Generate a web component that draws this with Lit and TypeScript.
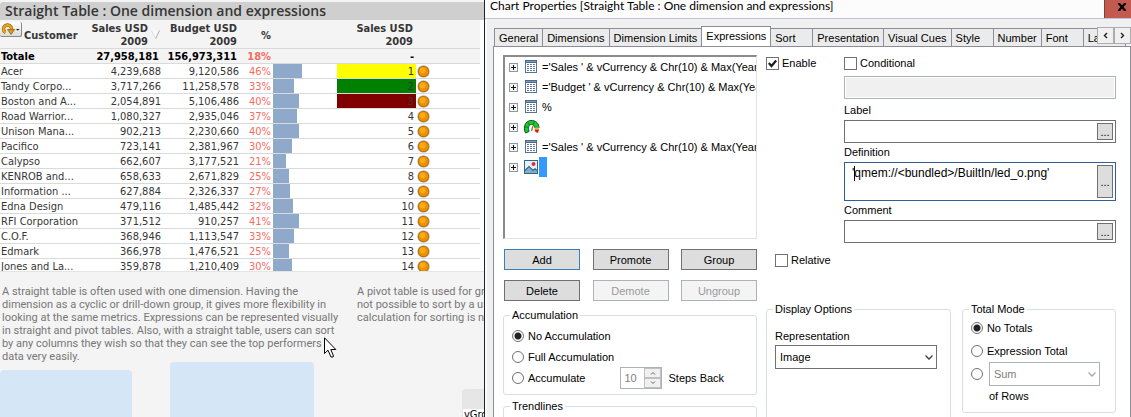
import { LitElement, html, css, svg, nothing } from "lit";
import { customElement } from "lit/decorators.js";
import { classMap } from "lit/directives/class-map.js";

type Row = [string, string, string, number];

const rows: Row[] = [
  ["Acer", "4,239,688", "9,120,586", 46],
  ["Tandy Corpo...", "3,717,266", "11,258,578", 33],
  ["Boston and A...", "2,054,891", "5,106,486", 40],
  ["Road Warrior...", "1,080,327", "2,935,046", 37],
  ["Unison Mana...", "902,213", "2,230,660", 40],
  ["Pacifico", "723,141", "2,381,967", 30],
  ["Calypso", "662,607", "3,177,521", 21],
  ["KENROB and...", "658,633", "2,671,829", 25],
  ["Information ...", "627,884", "2,326,337", 27],
  ["Edna Design", "479,116", "1,485,442", 32],
  ["RFI Corporation", "371,512", "910,257", 41],
  ["C.O.F.", "368,946", "1,113,547", 33],
  ["Edmark", "366,978", "1,476,521", 25],
  ["Jones and La...", "359,878", "1,210,409", 30],
];

const reset = css`
  *, *::before, *::after { box-sizing: border-box; }
  button, input, select, textarea { font: inherit; color: inherit; margin: 0; border-radius: 0; }
`;

@customElement("sheet-view")
class SheetView extends LitElement {
  static styles = [reset, css`
    :host {
      display: flex; flex-direction: column; position: relative; overflow: hidden;
      background: #f4f4f4; color: #363636;
      font: 11px/14px "DejaVu Sans Condensed", "DejaVu Sans", sans-serif;
    }
    .above { height: 2px; display: flex; align-items: flex-end; gap: 26px; padding-left: 342px; overflow: hidden; font-weight: bold; line-height: 11px; flex: none; }
    .caption { margin: 0; height: 18px; padding-left: 5px; flex: none; background: #cfcfcf; font: 600 14px/17px "Open Sans", sans-serif; white-space: nowrap; color: #363636; border-top-left-radius: 3px; }
    .tablewrap { background: #fff; height: 252px; overflow: hidden; border-bottom: 1px solid #e4e4e4; flex: none; padding-right: 4px; }
    table { width: 100%; table-layout: fixed; border-collapse: separate; border-spacing: 0; }
    th, td { padding: 0 1px; text-align: right; white-space: nowrap; overflow: hidden; border-bottom: 1px solid #dadada; }
    th { background: #f4f4f4; height: 29px; line-height: 13px; padding-top: 2px; }
    td { height: 15px; line-height: 12px; padding-top: 2px; }
    .name { width: 78px; text-align: left; }
    .sales { width: 84px; }
    .budget { width: 78px; }
    .pct { width: 33px; padding-right: 2px; }
    .gauge { width: 64px; padding: 0; }
    .rank { width: 79px; padding-right: 2px; }
    td.pct { color: #f76b5f; }
    th.sales { padding-right: 2px; }
    th.budget, th.rank { padding-right: 3px; }
    .custhead { display: flex; align-items: center; gap: 2px; }
    .cycle { width: 22px; height: 15px; padding: 0; border: 1px solid #888; border-width: 0 1px 1px 0; border-radius: 2px; background: linear-gradient(#fff, #dcdcdc); display: grid; place-items: center; margin: -12px 0 0 -1px; flex: none; }
    .saleshead { display: flex; justify-content: flex-end; align-items: center; gap: 3px; }
    .total td { font-weight: bold; color: #000; background: #f4f4f4; }
    .total td.pct { color: #f76b5f; }
    .total .sales, .total .budget { padding-right: 3px; }
    .bar { height: 14px; background: #8ea9ca; }
    .yellow { background: #ff0; }
    .green { background: #008000; }
    .maroon { background: #800000; }
    .led { text-align: left; padding: 0 1px; }
    .led svg { display: block; }
    .notes { display: grid; grid-template-columns: 355px 1fr; padding: 13px 0 0 2px; height: 90px; font: 11px/13px Roboto, sans-serif; color: #777; white-space: nowrap; flex: none; }
    .notes p { margin: 0; }
    .cards { flex: 1; display: flex; align-items: stretch; min-height: 0; }
    .card { background: #d5e6f6; border-radius: 4px 4px 0 0; }
    .small { width: 132px; margin: 8px 38px 0 0; }
    .large { width: 144px; margin-right: 148px; }
    .variable { flex: 1; margin-top: 27px; background: #e6e6e6; border-radius: 4px 0 0 0; padding: 20px 0 0 1px; overflow: hidden; color: #000; }
    .variable span { display: block; background: #fff; padding-left: 1px; line-height: 12px; height: 30px; }
    .cursor { position: absolute; left: 324px; top: 337px; }
  `];

  render() {
    return html`
      <div class="above"><span>Names</span><span>Names</span></div>
      <h1 class="caption">Straight Table : One dimension and expressions</h1>
      <div class="tablewrap">
        <table>
          <thead><tr>
            <th class="name"><div class="custhead">
              <button class="cycle" aria-label="Cycle dimension">
                <svg width="20" height="14" viewBox="0 0 20 14">
                  <path d="M4.500 10.500A4 4 0 1 1 10.500 7" fill="none" stroke="#9a6200" stroke-width="3.400"/>
                  <path d="M4.500 10.500A4 4 0 1 1 10.500 7" fill="none" stroke="#f0a820" stroke-width="2"/>
                  <path d="M6.500 7.500h7.200L10 12.500z" fill="#e09a10" stroke="#805000" stroke-width=".7"/>
                  <path d="M15 7h3.600l-1.800 1.800z" fill="#222"/>
                </svg>
              </button>Customer</div></th>
            <th class="sales"><div class="saleshead"><span>Sales USD<br>2009</span>
              <svg width="9" height="10" viewBox="0 0 9 10"><path d="M.5.5h8L4.500 9z" fill="#f8f8f8"/><path d="M8.500.5L4.500 9" stroke="#aaa"/><path d="M.5.5L4.500 9" stroke="#ddd"/></svg>
            </div></th>
            <th class="budget">Budget USD<br>2009</th>
            <th class="pct">%</th><th class="gauge"></th>
            <th class="rank">Sales USD<br>2009</th><th></th>
          </tr></thead>
          <tbody>
            <tr class="total"><td class="name">Totale</td><td class="sales">27,958,181</td><td class="budget">156,973,311</td><td class="pct">18%</td><td></td><td class="rank">-</td><td></td></tr>
            ${rows.map(([name, sales, budget, pct], i) => html`<tr>
              <td class="name">${name}</td><td class="sales">${sales}</td><td class="budget">${budget}</td><td class="pct">${pct}%</td>
              <td class="gauge"><div class="bar" style="width:${Math.round(pct * 0.64)}px"></div></td>
              <td class=${classMap({ rank: true, yellow: i === 0, green: i === 1, maroon: i === 2 })}>${i + 1}</td>
              <td class="led"><svg width="13" height="13" viewBox="0 0 13 13">
                <circle cx="6.500" cy="6.500" r="6.200" fill="#b9b4a8"/>
                <circle cx="6.500" cy="6.500" r="5.500" fill="#a8690c"/>
                <circle cx="6.500" cy="6.500" r="4.800" fill="#f09000"/><circle cx="5.600" cy="5.400" r="2.800" fill="#ffac12"/>
              </svg></td></tr>`)}
          </tbody>
        </table>
      </div>
      <div class="notes">
        <p>A straight table is often used with one dimension. Having the<br>dimension as a cyclic or drill-down group, it gives more flexibility in<br>looking at the same metrics. Expressions can be represented visually<br>in straight and pivot tables. Also, with a straight table, users can sort<br>by any columns they wish so that they can see the top performers<br>data very easily.</p>
        <p>A pivot table is used for gro<br>not possible to sort by a use<br>calculation for sorting is nee</p>
      </div>
      <div class="cards"><div class="card small"></div><div class="card large"></div><div class="variable"><span>vGroup</span></div></div>
      <svg class="cursor" width="13" height="22" viewBox="0 0 13 22"><path d="M.5.8V16.500L4 13.200L7 20H9L9.500 19L6.800 12.500H11.800Z" fill="#fff" stroke="#000"/></svg>
    `;
  }
}

const tableIcon = svg`<rect x=".5" y=".5" width="11" height="12" fill="#fff" stroke="#5a7394"/><path d="M0 0h12v3H0z" fill="#4b698f"/><path d="M1 1h10v1H1z" fill="#7f9cc0"/><path d="M2 4h2v1H2zM5 4h2v1H5zM8 4h2v1H8zM2 6h2v1H2zM5 6h2v1H5zM8 6h2v1H8zM2 8h2v1H2zM5 8h2v1H5zM8 8h2v1H8zM2 10h2v1H2zM5 10h2v1H5zM8 10h2v1H8z" fill="#6078a8"/>`;
const gaugeIcon = svg`<path d="M1.500 13C-1 8 .5 1 7 .5C12 .3 15 3.500 15 8H11C10.500 5.500 9 4.500 7.500 4.500C5 4.500 4 7 5 11.500z" fill="#1cc832" stroke="#0a5c14"/><path d="M4 2.500L5.500 5M1 7H4M10 1.500L9.500 4.500" stroke="#0a7a1c"/><path d="M10.500 7.500h4.500v2h-4.500z" fill="#e8c020"/><path d="M10.500 9.500h4.500L14 13L11.500 12z" fill="#e01818"/><path d="M7.500 11L9 6" stroke="#777" stroke-width="1.300"/>`;
const imageIcon = svg`<rect x=".5" y=".5" width="13" height="13" fill="#e4f1f8" stroke="#35668a"/><path d="M1 13V11L5 7.500L9 11L11 9.500L13 11V13z" fill="#7fb0c8"/><path d="M1 10.500L5 6.500L9 10.500L11 8.800L13 10.500" fill="none" stroke="#2f5f80" stroke-width="1.200"/><circle cx="9.500" cy="4" r="2" fill="#e03028"/>`;

const tree: [unknown, string][] = [
  [tableIcon, "='Sales ' & vCurrency & Chr(10) & Max(Year"],
  [tableIcon, "='Budget ' & vCurrency & Chr(10) & Max(Year"],
  [tableIcon, "%"],
  [gaugeIcon, ""],
  [tableIcon, "='Sales ' & vCurrency & Chr(10) & Max(Year"],
  [imageIcon, ""],
];

const tabs = ["General", "Dimensions", "Dimension Limits", "Expressions", "Sort", "Presentation", "Visual Cues", "Style", "Number", "Font", "Layout"];

@customElement("chart-properties")
class ChartProperties extends LitElement {
  static styles = [reset, css`
    :host {
      display: flex; flex-direction: column; overflow: hidden; min-width: 0;
      border-left: 1px solid #20242c; background: #fcfcfc; color: #000;
      font: 11px/14px "Liberation Sans", Arial, sans-serif;
    }
    .title { display: flex; height: 19px; flex: none; border-bottom: 1px solid #bcc6d8; padding-left: 5px; }
    h2 { margin: 0; flex: 1; font: 12px/12px Lato, "Open Sans", sans-serif; white-space: nowrap; overflow: hidden; }
    .close { width: 27px; padding: 0 0 5px 7px; border: 1px solid #7c4038; border-width: 0 0 0 1px; background: #c35a50; display: grid; place-items: center; }
    .client { flex: 1; margin-left: 2px; padding: 7px 0 0 6px; background: #f0f0f0; display: flex; flex-direction: column; min-height: 0; }
    .tabbar { display: flex; position: relative; height: 20px; flex: none; overflow: hidden; padding-left: 1px; align-items: flex-end; }
    .tab { flex: none; height: 18px; min-width: 43px; padding: 0 4px; text-align: left; border: 1px solid #8b8d98; border-bottom: 0; margin-right: -1px; background: #ebebeb; line-height: 16px; }
    .tab.active { height: 20px; background: #fff; padding: 0 4px 2px; }
    .scroll { position: absolute; right: 0; top: 1px; display: flex; }
    .scroll button { width: 17px; height: 17px; padding: 0; border: 1px solid #adadad; background: #f0f0f0; display: grid; place-items: center; }
    .page { flex: 1; min-height: 0; overflow: hidden; background: #fff; border: 1px solid #8b8d98; border-bottom: 0; padding: 8px 14px 0 9px; display: grid; grid-template-columns: 254px minmax(0, 1fr); gap: 9px; align-items: start; }
    .tree { margin: 0; list-style: none; height: 184px; padding: 0 0 0 4px; border: 2px solid #8b8b8b; border-right: 1px solid #e3e3e3; border-bottom: 1px solid #e3e3e3; overflow: hidden; }
    .tree li { display: flex; align-items: center; height: 20px; white-space: nowrap; }
    .plus { width: 9px; height: 9px; padding: 0; border: 1px solid #8b98ac; background: #f4f4f0; display: grid; place-items: center; margin-right: 6px; flex: none; }
    .glyph { width: 16px; height: 14px; flex: none; margin-right: 2px; }
    .sel { width: 8px; height: 20px; background: #3399ff; margin-left: -3px; }
    .actions { display: grid; grid-template-columns: repeat(3, 76px); justify-content: space-between; row-gap: 10px; padding-left: 1px; margin: 10px 0 7px; }
    .push { height: 21px; padding: 0; border: 1px solid #707070; background: #ddd; line-height: 18px; }
    .push.default { border-color: #3c7fb1; }
    .push:disabled { color: #9a9a9a; background: #f4f4f4; border-color: #adb2b5; }
    fieldset { margin: 0; padding: 0 8px; border: 1px solid #d5dfe5; border-radius: 3px; min-width: 0; }
    legend { padding: 0 2px; margin-left: -2px; line-height: 14px; }
    .accum { height: 87px; margin-bottom: 4px; }
    .trend { height: 50px; }
    .line { display: flex; align-items: center; height: 21px; gap: 4px; white-space: nowrap; }
    .line label { flex: none; }
    .accum .line:first-of-type { margin-top: 3px; }
    input[type="radio"] { appearance: none; flex: none; width: 12px; height: 12px; border: 1px solid #707070; border-radius: 50%; background: #fff; }
    input[type="radio"]:checked { background: radial-gradient(circle, #222 0 3px, #fff 4px); }
    input[type="checkbox"] { appearance: none; flex: none; width: 13px; height: 13px; border: 1px solid #707070; background: #fff; grid-area: 1 / 1; }
    .tick { display: grid; place-items: center; flex: none; }
    .tick svg { grid-area: 1 / 1; pointer-events: none; }
    .check { display: flex; align-items: center; gap: 3px; height: 16px; }
    .spin { display: flex; width: 42px; height: 22px; border: 1px solid #adb2b5; margin-left: 31px; margin-right: 2px; color: #808080; }
    .spin input { width: 23px; min-width: 0; border: 0; padding: 0 0 0 3px; background: #fff; outline: 0; }
    .arrows { flex: 1; display: grid; grid-template-rows: 1fr 1fr; }
    .arrows button { padding: 0; border: 1px solid #c0c0c0; background: #f0f0f0; display: grid; place-items: center; min-height: 0; }
    .settings { display: grid; grid-template-columns: 78px minmax(0, 1fr); }
    .fields { display: flex; flex-direction: column; }
    .fields > label { line-height: 19px; height: 19px; }
    .off { height: 23px; margin: 5px 0 2px; width: 100%; border: 1px solid #adb2b5; background: #f0f0f0; outline: 1px solid #fff; outline-offset: -2px; }
    .box { display: flex; border: 1px solid #707070; background: #fff; padding: 2px; height: 23px; position: relative; }
    .box input, .box textarea { flex: 1; min-width: 0; border: 0; background: none; outline: 0; padding: 0 5px; resize: none; overflow: hidden; white-space: nowrap; }
    .box.tall { height: 39px; border-color: #2b6195; }
    .code { font-size: 12px; line-height: 17px; }
    .box button { width: 16px; padding: 0; border: 1px solid #707070; background: #ddd; }
    .caret { position: absolute; left: 9px; top: 3px; width: 1px; height: 15px; background: #000; }
    .relative { margin: 9px 0 34px 9px; }
    .groups { display: grid; grid-template-columns: minmax(0, 6fr) minmax(0, 5fr); gap: 11px; align-items: start; }
    .display { height: 140px; }
    .display label { display: block; margin: 13px 0 2px; }
    .combo { display: grid; height: 24px; width: 100%; max-width: 162px; }
    .combo select { grid-area: 1 / 1; appearance: none; border: 1px solid #707070; background: #fff; padding: 0 4px; width: 100%; }
    .combo svg { grid-area: 1 / 1; align-self: center; justify-self: end; margin-right: 4px; pointer-events: none; }
    .combo.dim { width: 111px; margin-left: 2px; }
    .combo.dim select { border-color: #adb2b5; color: #808080; opacity: 1; }
    .totals { height: 111px; }
    .totals .line { height: 23px; }
    .rowsof { display: block; padding: 4px 0 0 18px; }
  `];

  chevron(color: string) {
    return html`<svg width="8" height="8" viewBox="0 0 8 8"><path d="M.5 1.500L4 5L7.500 1.500V3.500L4 7L.5 3.500z" fill=${color}/></svg>`;
  }

  render() {
    return html`
      <header class="title">
        <h2>Chart Properties [Straight Table : One dimension and expressions]</h2>
        <button class="close" aria-label="Close"><svg width="10" height="8" viewBox="0 0 10 8"><path d="M1.500 0L8.500 8M8.500 0L1.500 8" stroke="#000" stroke-width="2.200"/></svg></button>
      </header>
      <div class="client">
        <div class="tabbar" role="tablist">
          ${tabs.map((t) => html`<button role="tab" class=${classMap({ tab: true, active: t === "Expressions" })}>${t}</button>`)}
          <div class="scroll">
            <button aria-label="Previous tabs"><svg width="5" height="7" viewBox="0 0 5 7"><path d="M4 1L1.500 3.500L4 6" fill="none" stroke="#222" stroke-width="1.400"/></svg></button>
            <button aria-label="Next tabs"><svg width="5" height="7" viewBox="0 0 5 7"><path d="M1 1L3.500 3.500L1 6" fill="none" stroke="#222" stroke-width="1.400"/></svg></button>
          </div>
        </div>
        <div class="page">
          <div>
            <ul class="tree">
              ${tree.map(([icon, text], i) => html`<li>
                <button class="plus" aria-label="Expand"><svg width="7" height="7" viewBox="0 0 7 7"><path d="M3 1h1v2h2v1H4v2H3V4H1V3h2z" fill="#111"/></svg></button>
                <svg class="glyph" viewBox=${i === 3 || i === 5 ? "0 0 16 14" : "-1 0 16 14"}>${icon}</svg>
                ${text ? html`<span>${text}</span>` : nothing}
                ${i === 5 ? html`<span class="sel"></span>` : nothing}
              </li>`)}
            </ul>
            <div class="actions">
              <button class="push default">Add</button><button class="push">Promote</button><button class="push">Group</button>
              <button class="push">Delete</button><button class="push" disabled>Demote</button><button class="push" disabled>Ungroup</button>
            </div>
            <fieldset class="accum">
              <legend>Accumulation</legend>
              <div class="line"><input type="radio" name="acc" id="a1" checked><label for="a1">No Accumulation</label></div>
              <div class="line"><input type="radio" name="acc" id="a2"><label for="a2">Full Accumulation</label></div>
              <div class="line"><input type="radio" name="acc" id="a3"><label for="a3">Accumulate</label>
                <div class="spin"><input id="steps" value="10" disabled><div class="arrows">
                  <button disabled aria-label="More"><svg width="6" height="4" viewBox="0 0 6 4"><path d="M1 3.500L3 1.500L5 3.500" fill="none" stroke="#666"/></svg></button>
                  <button disabled aria-label="Fewer"><svg width="6" height="4" viewBox="0 0 6 4"><path d="M1 .5L3 2.500L5 .5" fill="none" stroke="#666"/></svg></button>
                </div></div>
                <label for="steps">Steps Back</label></div>
            </fieldset>
            <fieldset class="trend"><legend>Trendlines</legend></fieldset>
          </div>
          <div>
            <div class="settings">
              <div class="check"><span class="tick"><input type="checkbox" id="enable" checked><svg width="9" height="9" viewBox="0 0 9 9"><path d="M.8 4L3.500 7L8.200 1.500" fill="none" stroke="#1c1c1c" stroke-width="2.200"/></svg></span><label for="enable">Enable</label></div>
              <div class="fields">
                <div class="check"><input type="checkbox" id="cond"><label for="cond">Conditional</label></div>
                <input class="off" aria-label="Condition" disabled>
                <label for="label">Label</label>
                <div class="box"><input id="label"><button>...</button></div>
                <label for="def">Definition</label>
                <div class="box tall"><textarea class="code" id="def" .value=${"'qmem://<bundled>/BuiltIn/led_o.png'"}></textarea><button>...</button><span class="caret"></span></div>
                <label for="comment">Comment</label>
                <div class="box"><input id="comment"><button>...</button></div>
              </div>
            </div>
            <div class="check relative"><input type="checkbox" id="rel"><label for="rel">Relative</label></div>
            <div class="groups">
              <fieldset class="display">
                <legend>Display Options</legend>
                <label for="rep">Representation</label>
                <div class="combo"><select id="rep"><option>Image</option></select>${this.chevron("#444")}</div>
              </fieldset>
              <fieldset class="totals">
                <legend>Total Mode</legend>
                <div class="line"><input type="radio" name="tot" id="t1" checked><label for="t1">No Totals</label></div>
                <div class="line"><input type="radio" name="tot" id="t2"><label for="t2">Expression Total</label></div>
                <div class="line"><input type="radio" name="tot" id="t3"><div class="combo dim"><select disabled aria-label="Aggregation"><option>Sum</option></select>${this.chevron("#aaa")}</div></div>
                <label class="rowsof" for="t3">of Rows</label>
              </fieldset>
            </div>
          </div>
        </div>
      </div>
    `;
  }
}

@customElement("app-root")
class AppRoot extends LitElement {
  static styles = css`
    :host { display: grid; grid-template-columns: 484px minmax(0, 1fr); grid-template-rows: minmax(0, 1fr); height: 100vh; overflow: hidden; }
  `;
  render() {
    return html`<sheet-view></sheet-view><chart-properties></chart-properties>`;
  }
}
